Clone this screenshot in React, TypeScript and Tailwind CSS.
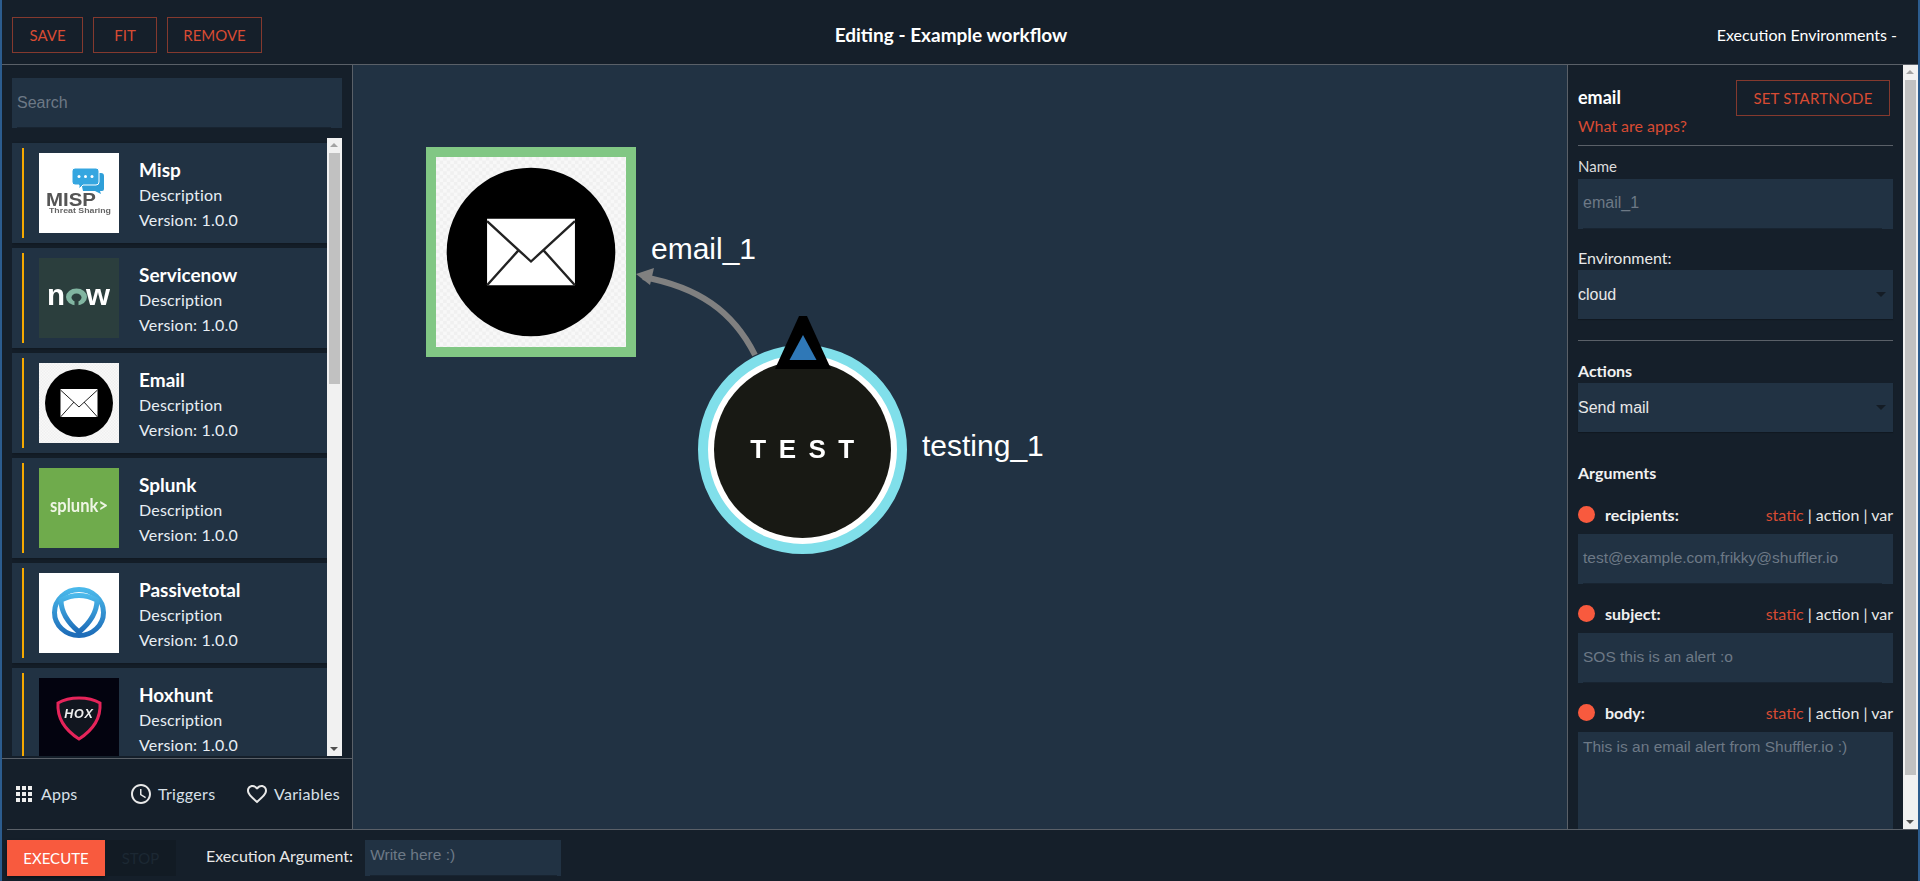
const apps = [
  { name: "Misp", logo: <MispLogo /> },
  { name: "Servicenow", logo: <NowLogo /> },
  { name: "Email", logo: <EmailLogo /> },
  { name: "Splunk", logo: <SplunkLogo /> },
  { name: "Passivetotal", logo: <PassiveLogo /> },
  { name: "Hoxhunt", logo: <HoxLogo /> },
];

function MispLogo() {
  return (
    <svg viewBox="0 0 80 80" className="h-full w-full">
      <rect width="80" height="80" fill="#fff" />
      <path d="M40 20h22a3 3 0 0 1 3 3v13a2 2 0 0 1-2 2h-2l1 3-6-3H44z" fill="#2f9fd8" />
      <path d="M36 15h21a3 3 0 0 1 3 3v11a3 3 0 0 1-3 3H44l-4 4v-4h-4a3 3 0 0 1-3-3V18a3 3 0 0 1 3-3z" fill="#35a6e0" stroke="#fff" strokeWidth="1" />
      <circle cx="40" cy="23.5" r="1.5" fill="#fff" />
      <circle cx="46.5" cy="23.5" r="1.5" fill="#fff" />
      <circle cx="53" cy="23.5" r="1.5" fill="#fff" />
      <text x="7" y="53" fontFamily="Liberation Sans" fontWeight="700" fontSize="19" fill="#555" textLength="50" lengthAdjust="spacingAndGlyphs">MISP</text>
      <text x="10" y="60" fontFamily="Liberation Sans" fontWeight="700" fontSize="7.5" fill="#666" textLength="62" lengthAdjust="spacingAndGlyphs">Threat Sharing</text>
    </svg>
  );
}

function NowLogo() {
  return (
    <svg viewBox="0 0 80 80" className="h-full w-full">
      <rect width="80" height="80" fill="#2b3e3d" />
      <text x="8" y="47" fontFamily="Liberation Sans" fontWeight="700" fontSize="30" fill="#fff" textLength="18" lengthAdjust="spacingAndGlyphs">n</text>
      <ellipse cx="37.5" cy="39" rx="10.500" ry="8.500" fill="#81b5a1" />
      <ellipse cx="37.5" cy="39.500" rx="5" ry="4" fill="#2b3e3d" />
      <rect x="35.500" y="42" width="4" height="6" fill="#2b3e3d" />
      <text x="47" y="47" fontFamily="Liberation Sans" fontWeight="700" fontSize="30" fill="#fff" textLength="24" lengthAdjust="spacingAndGlyphs">w</text>
    </svg>
  );
}

function EmailLogo({ r = 34 }: { r?: number }) {
  return (
    <svg viewBox="0 0 80 80" className="h-full w-full">
      <defs>
        <pattern id="checker" width="3" height="3" patternUnits="userSpaceOnUse">
          <rect width="3" height="3" fill="#f8f8f8" />
          <rect width="1.500" height="1.500" fill="#f0f0f0" />
          <rect x="1.500" y="1.500" width="1.500" height="1.500" fill="#f0f0f0" />
        </pattern>
      </defs>
      <rect width="80" height="80" fill="url(#checker)" />
      <circle cx="40" cy="40" r={r} fill="#000" />
      <rect x="21.500" y="26" width="37" height="28" fill="#fff" />
      <path d="M21.500 27l18.500 17 18.500-17M21.500 54l13.500-15M58.500 54l-13.500-15" fill="none" stroke="#222" strokeWidth="1" />
    </svg>
  );
}

function SplunkLogo() {
  return (
    <svg viewBox="0 0 80 80" className="h-full w-full">
      <rect width="80" height="80" fill="#6fab4c" />
      <text x="11" y="44" fontFamily="Lato" fontWeight="700" fontSize="19" fill="#eef5e4" textLength="58" lengthAdjust="spacingAndGlyphs">splunk&gt;</text>
    </svg>
  );
}

function PassiveLogo() {
  return (
    <svg viewBox="0 0 80 80" className="h-full w-full">
      <defs>
        <linearGradient id="pt" x1="0" y1="0" x2="0" y2="1">
          <stop offset="0" stopColor="#4ab8ea" />
          <stop offset="1" stopColor="#1d6cb8" />
        </linearGradient>
      </defs>
      <rect width="80" height="80" fill="#fff" />
      <ellipse cx="40" cy="39.500" rx="24.500" ry="23" fill="none" stroke="url(#pt)" strokeWidth="5" />
      <path d="M22 27Q40 18 58 27Q58 44 40 59Q22 44 22 27z" fill="#fff" stroke="url(#pt)" strokeWidth="5" strokeLinejoin="round" />
    </svg>
  );
}

function HoxLogo() {
  return (
    <svg viewBox="0 0 80 80" className="h-full w-full">
      <rect width="80" height="80" fill="#03030f" />
      <path d="M40 20c8 0 16 2 21 5 1 15-7 27-21 36-14-9-22-21-21-36 5-3 13-5 21-5z" fill="#11161f" stroke="#e6245a" strokeWidth="3" />
      <text x="40" y="40" textAnchor="middle" fontFamily="Liberation Sans" fontWeight="700" fontStyle="italic" fontSize="12.5" fill="#eee" letterSpacing="0.8">HOX</text>
    </svg>
  );
}

function Scrollbar({ thumbClass }: { thumbClass: string }) {
  return (
    <div className="relative h-full w-[15px] shrink-0 bg-[#f1f1f1]">
      <div className="absolute left-[3px] top-[5px] h-0 w-0 border-x-[4px] border-b-[4px] border-x-transparent border-b-[#a3a3a3]" />
      <div className={`absolute left-[2px] w-[11px] bg-[#c1c1c1] ${thumbClass}`} />
      <div className="absolute bottom-[5px] left-[3px] h-0 w-0 border-x-[4px] border-t-[4px] border-x-transparent border-t-[#505050]" />
    </div>
  );
}

function AppItem({ name, logo }: { name: string; logo: React.ReactNode }) {
  return (
    <div className="mb-[5px] flex h-[100px] shrink-0 items-center bg-[#213243] pl-[10px] shadow-[0_1px_3px_rgba(0,0,0,0.3)]">
      <div className="h-[90px] w-[2px] bg-[#f5a800]" />
      <div className="ml-[15px] h-[80px] w-[80px] shrink-0 blur-[0.3px]">{logo}</div>
      <div className="ml-[20px] pt-[3px] text-[16px] leading-[25px] tracking-[0.2px] text-[#e8eef4]">
        <div className="text-[19px] font-bold leading-[24px] tracking-normal text-white">{name}</div>
        <div>Description</div>
        <div>Version: 1.0.0</div>
      </div>
    </div>
  );
}

function FieldBox({ children, className = "h-[50px] w-[315px] text-[16px] leading-[48px]" }: { children: React.ReactNode; className?: string }) {
  return (
    <div className={`relative overflow-hidden bg-[#213243] px-[5px] font-['Liberation_Sans',sans-serif] text-[#6d7986] ${className}`}>
      {children}
      <div className="absolute bottom-0 left-[5px] right-[11px] h-px bg-[#182431]" />
    </div>
  );
}

function SelectBox({ children }: { children: React.ReactNode }) {
  return (
    <div className="flex h-[49px] w-[315px] items-center justify-between bg-[#213243] pr-[7px] font-['Liberation_Sans',sans-serif] text-[16px] text-[#e8e8e8] shadow-[0_1px_1px_rgba(0,0,0,0.2)]">
      {children}
      <div className="h-0 w-0 border-x-[5px] border-t-[5px] border-x-transparent border-t-[#141c25]" />
    </div>
  );
}

function ArgHeader({ label }: { label: string }) {
  return (
    <div className="flex h-[20px] w-[315px] items-center">
      <div className="h-[17px] w-[17px] rounded-full bg-[#f85a3e]" />
      <div className="ml-[10px] flex-1 pt-[2px] text-[16px] font-bold text-[#f1f1f1]">{label}</div>
      <div className="pt-[2px] text-[16px] text-[#e8e8e8]">
        <span className="text-[#d84b33]">static</span> | action | var
      </div>
    </div>
  );
}

function Canvas() {
  return (
    <div className="relative flex-1 overflow-hidden bg-[#213243]">
      <svg className="absolute left-0 top-0 h-full w-full">
        <path d="M402 290C380 246 345 222 290 212" fill="none" stroke="#808080" strokeWidth="6" />
        <path d="M283 209l18-6-4 17z" fill="#808080" />
      </svg>
      <div className="absolute left-[73px] top-[82px] h-[210px] w-[210px] border-[10px] border-[#81c784]">
        <div className="h-full w-full blur-[0.6px]">
          <EmailLogo r={35.5} />
        </div>
      </div>
      <div className="absolute left-[298px] top-[167px] font-['Liberation_Sans',sans-serif] text-[30px] leading-[34px] text-white">email_1</div>
      <div className="absolute left-[345px] top-[280px] flex h-[209px] w-[209px] items-center justify-center rounded-full border-[10px] border-[#80dfea] bg-white">
        <div className="flex h-[177px] w-[177px] items-center justify-center rounded-full bg-[#181914] blur-[0.6px]">
          <span className="pl-[12px] font-['Liberation_Sans',sans-serif] text-[26px] font-bold tracking-[12.5px] text-white">TEST</span>
        </div>
      </div>
      <svg className="absolute left-[420px] top-[249px] h-[56px] w-[60px]" viewBox="0 0 60 56">
        <path d="M26 2h8L58 55H2z" fill="#000" />
        <path d="M30 21L43.500 46H16.500z" fill="#2f78b7" />
      </svg>
      <div className="absolute left-[569px] top-[364px] font-['Liberation_Sans',sans-serif] text-[30px] leading-[34px] text-white">testing_1</div>
    </div>
  );
}

export default function App() {
  return (
    <div className="flex h-[881px] w-[1920px] overflow-hidden bg-[#151f2a] font-['Lato',sans-serif]">
      <div className="w-[2px] shrink-0 bg-[#2c5c8e]" />
      <div className="flex min-w-0 flex-1 flex-col">
        <header className="grid h-[65px] shrink-0 grid-cols-3 items-center border-b border-[#5a6068] px-[10px] pt-[6px] text-white">
          <div className="flex gap-[10px] text-[15px] text-[#d84b33]">
            <button className="h-[36px] w-[71px] border border-[#84392e]">SAVE</button>
            <button className="h-[36px] w-[64px] border border-[#84392e]">FIT</button>
            <button className="h-[36px] w-[95px] border border-[#84392e]">REMOVE</button>
          </div>
          <div className="pr-[18px] text-center text-[19px] font-bold">Editing - Example workflow</div>
          <div className="pr-[11px] text-right text-[16px]">Execution Environments -</div>
        </header>

        <div className="flex h-[764px] shrink-0">
          <aside className="flex w-[351px] shrink-0 flex-col border-r border-[#5a6068]">
            <div className="px-[10px] pt-[13px]">
              <FieldBox className="h-[50px] w-[330px] text-[16px] leading-[50px]">Search</FieldBox>
            </div>
            <div className="mx-[10px] mt-[10px] flex h-[618px] w-[330px]">
              <div className="flex w-[315px] flex-col overflow-hidden pt-[5px]">
                {apps.map((app) => (
                  <AppItem key={app.name} name={app.name} logo={app.logo} />
                ))}
              </div>
              <Scrollbar thumbClass="top-[15px] h-[231px]" />
            </div>
            <div className="mt-[2px] flex h-[71px] items-center border-t border-[#5a6068] text-[16px] text-[#d8e0e8]">
              <svg viewBox="0 0 24 24" className="ml-[10px] h-[24px] w-[24px]" fill="#eeeeee">
                <path d="M4 8h4V4H4v4zm6 12h4v-4h-4v4zm-6 0h4v-4H4v4zm0-6h4v-4H4v4zm6 0h4v-4h-4v4zm6-10v4h4V4h-4zm-6 4h4V4h-4v4zm6 6h4v-4h-4v4zm0 6h4v-4h-4v4z" />
              </svg>
              <span className="ml-[5px] w-[37px] tracking-[0.2px]">Apps</span>
              <svg viewBox="0 0 24 24" className="ml-[51px] h-[24px] w-[24px]" fill="#e8e8e8">
                <path d="M11.990 2C6.470 2 2 6.480 2 12s4.470 10 9.990 10C17.520 22 22 17.520 22 12S17.520 2 11.990 2zM12 20c-4.420 0-8-3.580-8-8s3.580-8 8-8 8 3.580 8 8-3.580 8-8 8z" />
                <path d="M12.500 7H11v6l5.250 3.150.750-1.230-4.500-2.670z" />
              </svg>
              <span className="ml-[5px] w-[58px] tracking-[0.3px]">Triggers</span>
              <svg viewBox="0 0 24 24" className="ml-[29px] h-[24px] w-[24px]" fill="#e8e8e8">
                <path d="M16.500 3c-1.740 0-3.410.810-4.500 2.090C10.910 3.810 9.240 3 7.500 3 4.420 3 2 5.420 2 8.500c0 3.780 3.400 6.860 8.550 11.540L12 21.350l1.450-1.320C18.600 15.360 22 12.280 22 8.500 22 5.420 19.580 3 16.500 3zm-4.400 15.550l-.1.100-.1-.1C7.140 14.240 4 11.390 4 8.500 4 6.500 5.500 5 7.500 5c1.540 0 3.040.990 3.570 2.360h1.870C13.460 5.990 14.960 5 16.500 5c2 0 3.500 1.500 3.500 3.500 0 2.890-3.140 5.740-7.900 10.050z" />
              </svg>
              <span className="ml-[5px] tracking-[0.3px]">Variables</span>
            </div>
          </aside>

          <Canvas />

          <aside className="flex w-[351px] shrink-0 border-l border-[#5a6068]">
            <div className="w-[335px] overflow-hidden pl-[10px]">
              <div className="flex h-[80px] w-[315px] items-start justify-between pt-[15px]">
                <div>
                  <div className="text-[18px] font-bold leading-[34px] text-white">email</div>
                  <div className="text-[16px] leading-[24px] text-[#d84b33]">What are apps?</div>
                </div>
                <button className="mr-[3px] h-[36px] w-[154px] border border-[#84392e] text-[15px] tracking-[0.2px] text-[#d84b33]">SET STARTNODE</button>
              </div>
              <div className="h-px w-[315px] bg-[#5a6068]" />
              <div className="mt-[9px] text-[15px] leading-[22px] text-[#dddddd]">Name</div>
              <div className="mt-[2px]"><FieldBox>email_1</FieldBox></div>
              <div className="mt-[18px] text-[16px] leading-[22px] text-[#e8e8e8]">Environment:</div>
              <div className="mt-[1px]"><SelectBox>cloud</SelectBox></div>
              <div className="mt-[21px] h-px w-[315px] bg-[#5a6068]" />
              <div className="mt-[19px] text-[16px] font-bold leading-[22px] text-[#f1f1f1]">Actions</div>
              <div className="mt-[1px]"><SelectBox>Send mail</SelectBox></div>
              <div className="mt-[30px] text-[16px] font-bold leading-[22px] text-[#f1f1f1]">Arguments</div>
              <div className="mt-[20px]"><ArgHeader label="recipients:" /></div>
              <div className="mt-[10px]"><FieldBox className="h-[50px] w-[315px] text-[15.5px] leading-[48px]">test@example.com,frikky@shuffler.io</FieldBox></div>
              <div className="mt-[19px]"><ArgHeader label="subject:" /></div>
              <div className="mt-[10px]"><FieldBox className="h-[50px] w-[315px] text-[15.5px] leading-[48px]">SOS this is an alert :o</FieldBox></div>
              <div className="mt-[19px]"><ArgHeader label="body:" /></div>
              <div className="mt-[10px]"><FieldBox className="h-[120px] w-[315px] text-[15.5px] leading-[30px]">This is an email alert from Shuffler.io :)</FieldBox></div>
            </div>
            <Scrollbar thumbClass="top-[15px] h-[695px]" />
          </aside>
        </div>

        <footer className="ml-[5px] flex flex-1 items-start border-t border-[#5a6068] pt-[10px]">
          <button className="h-[36px] w-[98px] bg-[#f85a3e] text-[15px] text-white shadow-[0_2px_3px_rgba(0,0,0,0.4)]">EXECUTE</button>
          <button className="h-[36px] w-[71px] bg-[#121b24] text-[15px] text-[#1c2833]">STOP</button>
          <div className="ml-[30px] text-[16px] leading-[32px] text-[#e8e8e8]">Execution Argument:</div>
          <div className="relative ml-[12px] h-[36px] w-[196px] bg-[#213243] px-[5px] font-['Liberation_Sans',sans-serif] text-[15.5px] leading-[30px] text-[#6d7986]">
            Write here :)
            <div className="absolute bottom-0 left-[5px] right-[4px] h-px bg-[#182431]" />
          </div>
        </footer>
      </div>
      <div className="w-[2px] shrink-0 bg-[#2c5c8e]" />
    </div>
  );
}
